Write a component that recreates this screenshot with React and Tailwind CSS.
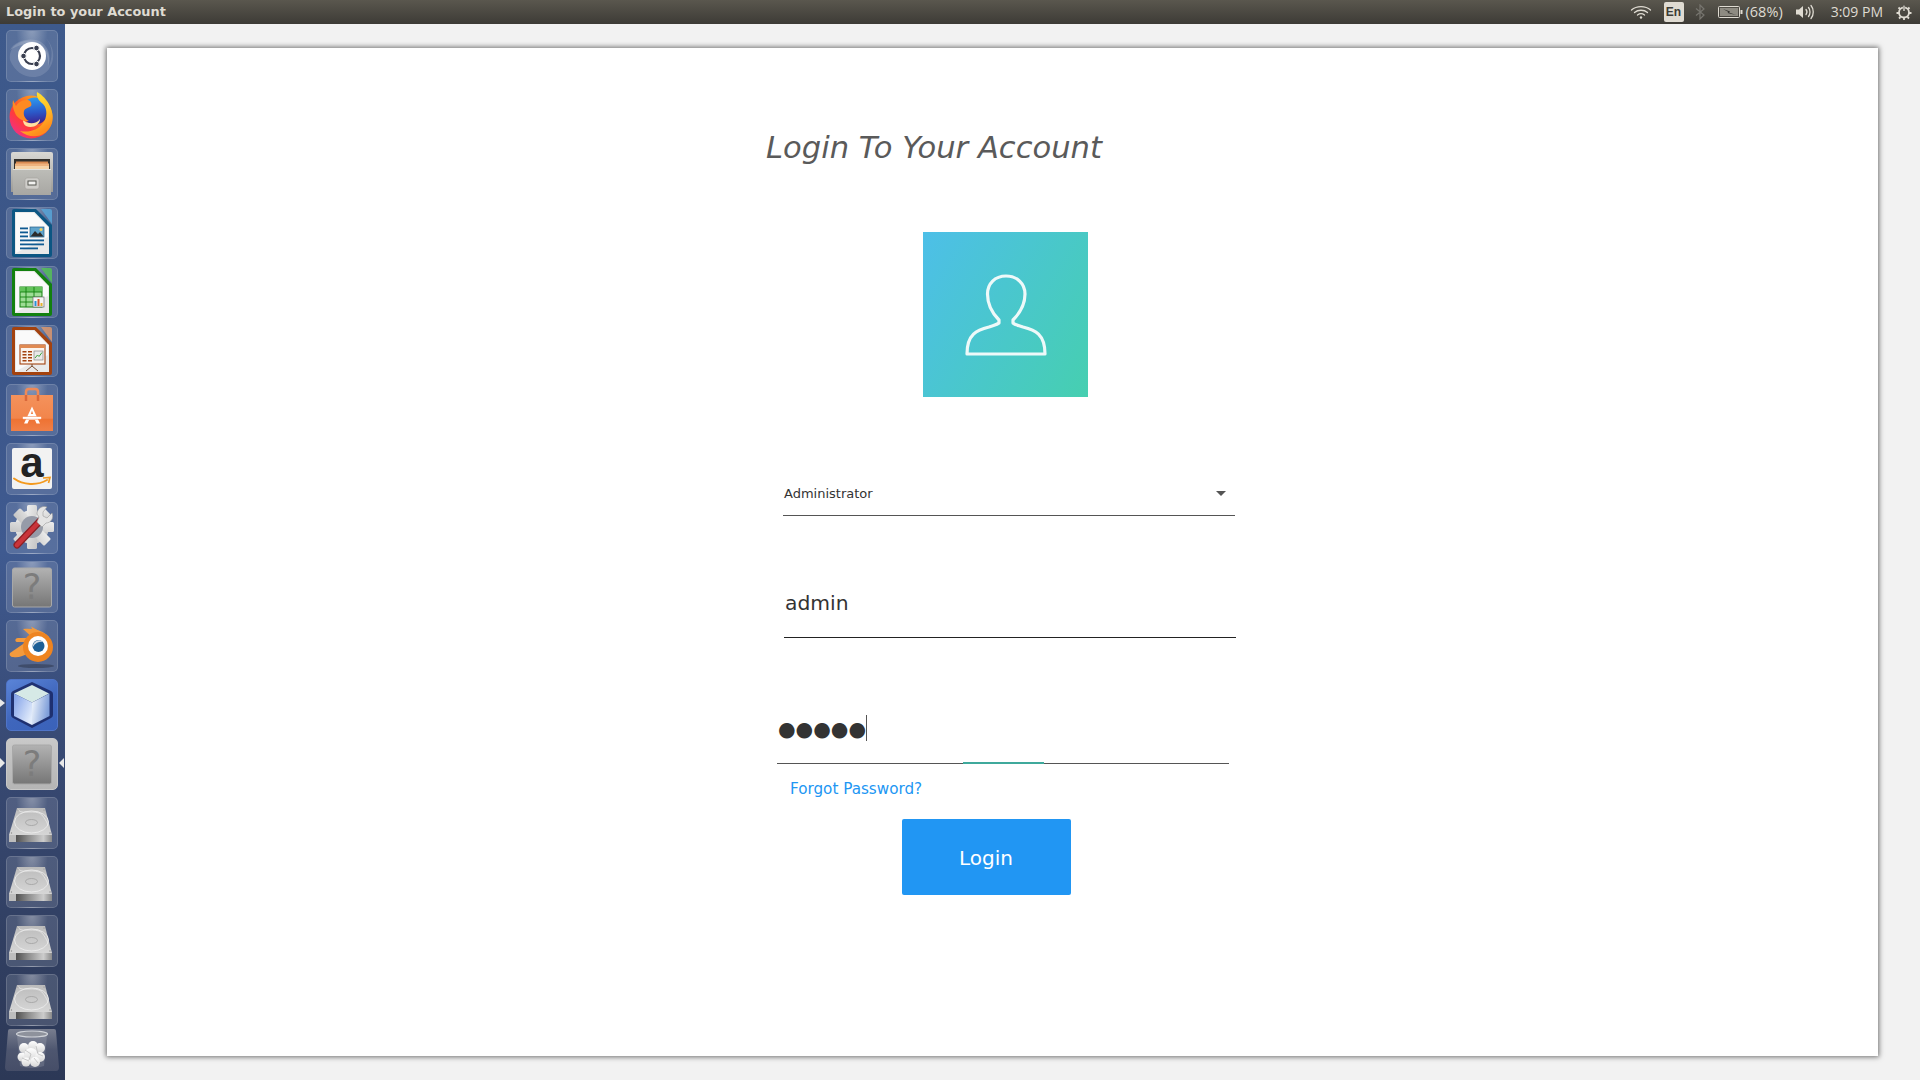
const dv = { fontFamily: '"DejaVu Sans", sans-serif' };

function Tile({ children, active, focus }) {
  const bg = active
    ? 'bg-[linear-gradient(150deg,#5a84d8,#3f66bc_55%,#3a62ba)] border-[#4f74c8]'
    : focus
    ? 'bg-[linear-gradient(180deg,#c9c9c9,#b5b5b5)] border-[#c8c8c8]'
    : 'bg-[radial-gradient(ellipse_at_50%_-5%,rgba(255,255,255,0.42),rgba(255,255,255,0.13)_45%,rgba(255,255,255,0.13))] border-white/15';
  return (
    <div className={`relative h-[52px] w-[52px] shrink-0 rounded-[5px] border ${bg}`}>
      <svg viewBox="0 0 52 52" className="absolute left-[-1px] top-[-1px] h-[52px] w-[52px] overflow-visible">{children}</svg>
    </div>
  );
}

const Ubuntu = () => (
  <>
    <path d="M4 30 C2 14 18 8 30 12 C40 16 45 24 43 36 C48 24 46 12 36 5 C52 16 50 38 36 45 C26 50 10 46 4 30Z" fill="#fff" opacity="0.13" />
    <path d="M4 20 C8 12 20 8 30 10 C42 13 46 26 42 36 C44 20 30 10 18 14 C12 16 7 18 4 20Z" fill="#fff" opacity="0.15" />
    <circle cx="26" cy="26" r="14" fill="#fff" />
    <circle cx="26" cy="26" r="8" fill="none" stroke="#3a3f50" strokeWidth="2.2" />
    <circle cx="17.5" cy="26" r="2.8" fill="#3a3f50" stroke="#fff" strokeWidth="1" />
    <circle cx="30.5" cy="18" r="2.8" fill="#3a3f50" stroke="#fff" strokeWidth="1" />
    <circle cx="30.5" cy="34" r="2.8" fill="#3a3f50" stroke="#fff" strokeWidth="1" />
  </>
);

const Firefox = () => (
  <>
    <defs>
      <linearGradient id="ffa" x1="0.1" y1="0.9" x2="0.8" y2="0.2">
        <stop offset="0" stopColor="#f0308a" />
        <stop offset="0.35" stopColor="#ff3b3b" />
        <stop offset="0.75" stopColor="#ff7a1f" />
        <stop offset="1" stopColor="#ffa51c" />
      </linearGradient>
      <linearGradient id="ffb" x1="0" y1="0" x2="0.4" y2="1">
        <stop offset="0" stopColor="#ffea30" />
        <stop offset="0.6" stopColor="#ffc22a" />
        <stop offset="1" stopColor="#ff8c1c" />
      </linearGradient>
      <linearGradient id="ffc" x1="0.4" y1="0" x2="0.5" y2="1">
        <stop offset="0" stopColor="#2d9cf0" />
        <stop offset="0.55" stopColor="#2b58c8" />
        <stop offset="1" stopColor="#3d1d8c" />
      </linearGradient>
    </defs>
    <circle cx="25" cy="28" r="21.500" fill="url(#ffa)" />
    <circle cx="29" cy="22" r="13.500" fill="url(#ffc)" />
    <path d="M17 31 C21 35 30 36 34 30 C34 36 26 40 20 37 C18 36 17 33 17 31Z" fill="#ffe0a0" />
    <path d="M7 11 L10 17 C13 12 17 11 22 11 C25 12 26 15 25 17 C22 19 19 19 18 22 C17 26 19 30 23 32 C17 33 11 29 9 24 C7 20 6 15 7 11Z" fill="#ff8a22" />
    <path d="M31 3 C30 8 33 12 37 15 C42 20 41 29 37 34 C32 41 23 44 14 42 C26 52 42 47 46 34 C49 23 42 9 31 3Z" fill="url(#ffb)" />
  </>
);

const Files = () => (
  <>
    <defs>
      <linearGradient id="fa" x1="0" y1="0" x2="0" y2="1">
        <stop offset="0" stopColor="#bdbdb8" />
        <stop offset="1" stopColor="#a8a7a3" />
      </linearGradient>
      <linearGradient id="fb" x1="0" y1="0" x2="0" y2="1">
        <stop offset="0" stopColor="#d9d8d4" />
        <stop offset="1" stopColor="#9c9b97" />
      </linearGradient>
    </defs>
    <path d="M5 6 Q5 4 7 4 H45 Q47 4 47 6 V44 H5Z" fill="url(#fb)" />
    <rect x="8" y="11" width="36" height="11" fill="#33302c" />
    <path d="M10 13.500 H42 V21 H10Z" fill="#d98a52" />
    <path d="M9 15.500 H43 V21 H9Z" fill="#eeb27e" />
    <rect x="9" y="18" width="34" height="3.500" fill="#f6d3a8" />
    <rect x="7" y="21" width="38" height="26" fill="url(#fa)" />
    <rect x="7" y="21" width="38" height="1" fill="#e3e2de" />
    <rect x="19" y="30" width="14" height="11" rx="2" fill="#cfceca" stroke="#9c9b97" strokeWidth="0.5" />
    <rect x="22" y="33" width="8" height="4" fill="#f2f2f0" stroke="#55544f" strokeWidth="1" />
  </>
);

const Doc = ({ edge, corner, children }) => (
  <>
    <path d="M35 2 H44 Q46 2 46 4 V17Z" fill={corner} opacity="0.8" />
    <path d="M8 2 H30 L46 18 V48 Q46 50 44 50 H8 Q6 50 6 48 V4 Q6 2 8 2Z" fill={edge} />
    <path d="M9 5 H28.500 L43 20 V47 H9Z" fill="#e9e9e9" />
    <path d="M10 6 H28 L42 20 V30 L10 46Z" fill="#fafafa" />
    {children}
  </>
);

const Writer = () => (
  <Doc edge="#0c5683" corner="#58a9dc">
    <g fill="#0f5a92">
      <rect x="14" y="20.500" width="8" height="1.800" />
      <rect x="14" y="24.500" width="8" height="1.800" />
      <rect x="14" y="28.500" width="8" height="1.800" />
      <rect x="14" y="32.500" width="24" height="1.800" />
      <rect x="14" y="36.500" width="24" height="1.800" />
      <rect x="14" y="40.500" width="18" height="1.800" />
    </g>
    <rect x="24" y="20" width="14" height="10" fill="#5fa4cc" stroke="#245f88" strokeWidth="0.7" />
    <path d="M24.500 29.500 L29 24 L32 27 L34 25 L37.500 29.500Z" fill="#2c2c2c" />
    <circle cx="35" cy="22.500" r="1.500" fill="#f4cf5a" />
  </Doc>
);

const Calc = () => (
  <Doc edge="#12800f" corner="#55c554">
    <rect x="14" y="21" width="22" height="20" fill="#9ddc95" stroke="#12800f" strokeWidth="1" />
    <rect x="14" y="21" width="22" height="5" fill="#63c35b" />
    <g stroke="#12800f" strokeWidth="0.9">
      <path d="M14 26 H36 M14 31 H36 M14 36 H36 M20 21 V41 M28 21 V41" />
    </g>
    <rect x="27" y="31" width="11" height="10" fill="#f4f4f4" stroke="#6f6f6f" strokeWidth="0.7" />
    <rect x="28.500" y="35" width="2" height="5" fill="#2a8fd6" />
    <rect x="31.500" y="33" width="2" height="7" fill="#d9552b" />
    <rect x="34.500" y="37" width="2" height="3" fill="#e6b32e" />
  </Doc>
);

const Impress = () => (
  <Doc edge="#a3420f" corner="#e49a6c">
    <rect x="14" y="20" width="25" height="19" fill="#fbf4ee" stroke="#a3420f" strokeWidth="1.100" />
    <rect x="14" y="20" width="25" height="3" fill="#e08a52" />
    <g fill="#a3420f">
      <rect x="16.500" y="26" width="4" height="1.500" /><rect x="22" y="26" width="4" height="1.500" />
      <rect x="16.500" y="29" width="4" height="1.500" /><rect x="22" y="29" width="4" height="1.500" />
      <rect x="16.500" y="32" width="4" height="1.500" /><rect x="22" y="32" width="4" height="1.500" />
      <rect x="16.500" y="35" width="4" height="1.500" /><rect x="22" y="35" width="4" height="1.500" />
    </g>
    <rect x="28" y="26" width="9" height="9" fill="#e9e9e9" stroke="#777" strokeWidth="0.6" />
    <path d="M29 33 L31.500 30 L33 31.500 L36 27.500" stroke="#3ca33c" strokeWidth="1" fill="none" />
    <path d="M26 39 V41 M26 41 L20 46 M26 41 L32 46" stroke="#7a4a2c" strokeWidth="1" fill="none" />
  </Doc>
);

const Software = () => (
  <>
    <defs>
      <linearGradient id="sa" x1="0" y1="0" x2="0" y2="1">
        <stop offset="0" stopColor="#f4925c" />
        <stop offset="0.65" stopColor="#f2854b" />
        <stop offset="0.66" stopColor="#ee7232" />
        <stop offset="1" stopColor="#f08048" />
      </linearGradient>
    </defs>
    <path d="M20 17 V8 Q20 5 23 5 H29 Q32 5 32 8 V17" fill="none" stroke="#ee8a58" strokeWidth="2.500" />
    <path d="M5 11 H47 V47 H5Z" fill="url(#sa)" />
    <path d="M20 17 V11 M32 17 V11" stroke="#d9683a" strokeWidth="2.500" />
    <path d="M26 22.500 L18 39.500 H21.500 L23 36 H29 L30.500 39.500 H34Z M24.800 30 L26 26.500 L27.200 30Z" fill="#fff" fillRule="evenodd" />
    <rect x="16.500" y="32.500" width="19" height="2.800" rx="1" fill="#fff" stroke="#ee7232" strokeWidth="0.5" />
  </>
);

const Amazon = () => (
  <>
    <rect x="6" y="5" width="40" height="41" rx="2" fill="#f2f2f2" />
    <text x="26" y="34" textAnchor="middle" fontSize="42" fontWeight="bold" fontFamily="Liberation Sans, sans-serif" fill="#222">a</text>
    <path d="M8 35.500 C17 42 31 43 41 37" fill="none" stroke="#f39a1f" strokeWidth="2" strokeLinecap="round" />
    <path d="M37 35 L44 34.500 L42.500 40" fill="none" stroke="#f39a1f" strokeWidth="1.700" />
  </>
);

const Settings = () => (
  <>
    <defs>
      <linearGradient id="wa" x1="0" y1="0" x2="1" y2="1">
        <stop offset="0" stopColor="#eeeeee" />
        <stop offset="1" stopColor="#c4c4c4" />
      </linearGradient>
    </defs>
    <g fill="url(#wa)">
      <circle cx="26" cy="25" r="17" />
      <rect x="21" y="3" width="10" height="44" rx="1.500" />
      <rect x="21" y="3" width="10" height="44" rx="1.500" transform="rotate(45 26 25)" />
      <rect x="21" y="3" width="10" height="44" rx="1.500" transform="rotate(90 26 25)" />
      <rect x="21" y="3" width="10" height="44" rx="1.500" transform="rotate(135 26 25)" />
    </g>
    <circle cx="26" cy="25" r="11" fill="#969ba8" />
    <path d="M11 43 L34 19" stroke="#8c1f24" strokeWidth="7" strokeLinecap="round" />
    <path d="M11 43 L34 19" stroke="#c9343a" strokeWidth="4.600" strokeLinecap="round" />
    <path d="M31 20 L36 25 L40 21 C45 21 48 16 46 11 L41 16 L37 14 L37 10 L41 5 C36 3 31 7 31 12 L33 15Z" fill="#e4e4e4" stroke="#9a9a9a" strokeWidth="0.6" />
  </>
);

const Question = ({ id }) => (
  <>
    <defs>
      <linearGradient id={id} x1="0" y1="0" x2="0" y2="1">
        <stop offset="0" stopColor="#b2b2b2" />
        <stop offset="1" stopColor="#767676" />
      </linearGradient>
    </defs>
    <rect x="6.500" y="7" width="39" height="39" rx="2" fill={`url(#${id})`} stroke="#a8a8a8" strokeWidth="1" />
    <text x="26" y="38" textAnchor="middle" fontSize="35" fontFamily="DejaVu Sans, sans-serif" fill="#7c7c7c">?</text>
  </>
);

const Blender = () => (
  <>
    <path d="M4 33 L20 22 L11 22 C8.500 21.500 9 18 12 18 L27 18 L17 9 C30 8 37 11 43 17 L22 33 C18 36 12 38 7 37 C4.500 37 3 35 4 33Z" fill="#f39a3c" />
    <path d="M25 6.500 L33 11 L28 13Z" fill="#f39a3c" />
    <circle cx="32" cy="27" r="15" fill="#ee8420" />
    <circle cx="32" cy="26" r="10" fill="#fff" />
    <circle cx="32.500" cy="26" r="6" fill="#1d5f96" />
    <path d="M27 27 A6 6 0 0 1 37 22 A9 9 0 0 0 27 27Z" fill="#cfd9e3" />
    <ellipse cx="30" cy="46" rx="18" ry="2" fill="#000" opacity="0.25" />
  </>
);

const Cube = () => (
  <>
    <defs>
      <linearGradient id="ca" x1="0" y1="0" x2="1" y2="0.7">
        <stop offset="0" stopColor="#7f9fe8" />
        <stop offset="1" stopColor="#e2ecfb" />
      </linearGradient>
      <linearGradient id="cb" x1="0" y1="0" x2="1" y2="0.3">
        <stop offset="0" stopColor="#f4f9fd" />
        <stop offset="1" stopColor="#7f9fda" />
      </linearGradient>
    </defs>
    <path d="M26 3 L45 12 Q47 13 47 15 V36 Q47 38 45 39 L26 49 L7 39 Q5 38 5 36 V15 Q5 13 7 12Z" fill="#1b2a68" opacity="0.9" />
    <path d="M26 6 L43 14.500 L26 23.500 L8 14.500Z" fill="#d6e9e6" />
    <path d="M8 14.500 L26 23.500 V46 L8 37Z" fill="url(#ca)" />
    <path d="M26 23.500 L43.500 14.500 V37 L26 46Z" fill="url(#cb)" />
  </>
);

const Disk = () => (
  <>
    <defs>
      <linearGradient id="da" x1="0" y1="0" x2="0" y2="1">
        <stop offset="0" stopColor="#bcbcbc" />
        <stop offset="1" stopColor="#d6d6d6" />
      </linearGradient>
      <linearGradient id="db" x1="0" y1="0" x2="1" y2="0">
        <stop offset="0" stopColor="#2e2e2e" />
        <stop offset="0.45" stopColor="#8d8d8d" />
        <stop offset="0.8" stopColor="#cccccc" />
        <stop offset="1" stopColor="#8a8a8a" />
      </linearGradient>
    </defs>
    <path d="M11 11 H39 L46 38 H3Z" fill="url(#da)" />
    <rect x="3" y="38" width="43" height="7" fill="url(#db)" />
    <rect x="3" y="38" width="7" height="7" fill="#bdbdbd" />
    <ellipse cx="25.500" cy="25" rx="17" ry="11" fill="none" stroke="#ececec" strokeWidth="0.9" />
    <ellipse cx="25.500" cy="25.500" rx="6" ry="3" fill="none" stroke="#a0a0a0" strokeWidth="0.8" />
    <path d="M12 12 C14 18 24 13 33 16 C35 17 38 19 42 28" fill="none" stroke="#e8e8e8" strokeWidth="0.8" />
    <g fill="#8c8c8c">
      <circle cx="5.500" cy="36" r="0.7" /><circle cx="44" cy="36" r="0.7" /><circle cx="12" cy="13" r="0.6" /><circle cx="38" cy="13" r="0.6" />
    </g>
  </>
);

const Trash = () => (
  <div className="ml-[-1px] mt-[-5px] h-[44px] w-[54px] shrink-0">
    <svg viewBox="0 0 54 44" className="h-[44px] w-[54px]">
      <defs>
        <linearGradient id="ta" x1="0" y1="0" x2="0" y2="1">
          <stop offset="0" stopColor="#8a8e9c" />
          <stop offset="0.5" stopColor="#565d75" />
          <stop offset="1" stopColor="#4c536c" />
        </linearGradient>
        <linearGradient id="tb" x1="0" y1="0" x2="0" y2="1">
          <stop offset="0" stopColor="#ffffff" />
          <stop offset="1" stopColor="#d5d5d5" />
        </linearGradient>
      </defs>
      <path d="M5 1 H49 Q51 1 51 3 L54 39 Q54 43 51 43 H3 Q0 43 0 39 L3 3 Q3 1 5 1Z" fill="url(#ta)" opacity="0.8" />
      <path d="M12 7 L15 38 Q27 42 39 38 L42 7Z" fill="#fff" opacity="0.14" />
      <ellipse cx="27" cy="6" rx="15.500" ry="3" fill="#8e929c" stroke="#cfd2d8" strokeWidth="1.200" />
      <g fill="url(#tb)">
        <circle cx="19" cy="20" r="5" /><circle cx="28" cy="18" r="5" /><circle cx="35" cy="20" r="5" />
        <circle cx="17" cy="29" r="4.500" /><circle cx="26" cy="27" r="7" /><circle cx="35" cy="29" r="5" />
        <circle cx="21" cy="34" r="4.500" /><circle cx="30" cy="34" r="5" />
      </g>
      <path d="M20 22 L26 26 L24 32 M31 18 L33 26 L38 28 M17 30 L24 33 M29 30 L33 35" stroke="#bdbdbd" strokeWidth="0.8" fill="none" />
    </svg>
  </div>
);

function Launcher() {
  return (
    <aside className="relative flex w-[65px] shrink-0 flex-col gap-[7px] bg-[linear-gradient(180deg,#3e5a8c_0%,#3b5587_24%,#3f5a90_50%,#384a74_68%,#2c3856_100%)] pl-[6px] pt-[6px]">
      <Tile><Ubuntu /></Tile>
      <Tile><Firefox /></Tile>
      <Tile><Files /></Tile>
      <Tile><Writer /></Tile>
      <Tile><Calc /></Tile>
      <Tile><Impress /></Tile>
      <Tile><Software /></Tile>
      <Tile><Amazon /></Tile>
      <Tile><Settings /></Tile>
      <Tile><Question id="qa" /></Tile>
      <Tile><Blender /></Tile>
      <Tile active><Cube /></Tile>
      <Tile focus><Question id="qb" /></Tile>
      <Tile><Disk /></Tile>
      <Tile><Disk /></Tile>
      <Tile><Disk /></Tile>
      <Tile><Disk /></Tile>
      <Trash />
      <span className="absolute left-0 top-[675px] h-0 w-0 border-y-[4px] border-l-[5px] border-y-transparent border-l-[#e8e8e8]" />
      <span className="absolute left-0 top-[734px] h-0 w-0 border-y-[5px] border-l-[5px] border-y-transparent border-l-[#e8e8e8]" />
      <span className="absolute left-[59px] top-[734px] h-0 w-0 border-y-[5px] border-r-[5px] border-y-transparent border-r-[#e8e8e8]" />
    </aside>
  );
}

function TopBar() {
  return (
    <header className="flex h-[24px] shrink-0 items-center bg-[linear-gradient(180deg,#5a574e,#3d3b36)] pl-[6px] text-[#dfdbd2]">
      <span className="text-[12.900px] font-bold leading-none" style={dv}>Login to your Account</span>
      <div className="ml-auto flex items-center">
        <svg viewBox="0 0 22 16" className="h-[16px] w-[22px]" fill="none" stroke="#dfdbd2" strokeLinecap="round">
          <path d="M1.500 6 C6.500 1.500 15.500 1.500 20.500 6" strokeWidth="1.300" />
          <path d="M4.500 8.500 C8 5.500 14 5.500 17.500 8.500" strokeWidth="1.300" />
          <path d="M7.500 11 C9.500 9.500 12.500 9.500 14.500 11" strokeWidth="1.300" />
          <circle cx="11" cy="13.500" r="1.200" fill="#dfdbd2" stroke="none" />
        </svg>
        <span className="ml-[12px] flex h-[20px] w-[20px] items-center justify-center rounded-[2px] bg-[#dfdbd2] text-[12px] font-bold leading-none text-[#3d3b36]" style={{ fontFamily: '"Liberation Sans", sans-serif' }}>En</span>
        <svg viewBox="0 0 10 16" className="ml-[11px] h-[16px] w-[10px]" fill="none" stroke="#77756f" strokeWidth="1.200">
          <path d="M1 4.500 L9 11 L5 15 V1 L9 5 L1 11.500" />
        </svg>
        <svg viewBox="0 0 25 12" className="ml-[13px] h-[12px] w-[25px]">
          <rect x="0.500" y="0.500" width="21" height="11" rx="1" fill="none" stroke="#dfdbd2" />
          <rect x="2" y="2" width="18" height="8" fill="#8e8b82" />
          <path d="M5 3 L12 5.500 L11 6.500 L18 9 L9.500 7 L10.500 6Z" fill="#2e2d29" />
          <rect x="22.500" y="4" width="2" height="4" fill="#dfdbd2" />
        </svg>
        <span className="ml-[3px] text-[14.500px] leading-none" style={{ fontFamily: '"Open Sans", sans-serif' }}>(68%)</span>
        <svg viewBox="0 0 20 16" className="ml-[12px] h-[16px] w-[20px]" fill="none" stroke="#dfdbd2" strokeWidth="1.300" strokeLinecap="round">
          <path d="M1 5.500 H4 L8 2 V14 L4 10.500 H1Z" fill="#dfdbd2" stroke="none" />
          <path d="M11 5.500 C12.200 7 12.200 9 11 10.500" />
          <path d="M13.500 3.500 C15.500 6 15.500 10 13.500 12.500" />
          <path d="M16 1.500 C19 5 19 11 16 14.500" />
        </svg>
        <span className="ml-[16px] text-[14px] leading-none" style={{ fontFamily: '"Open Sans", sans-serif' }}>3:09 PM</span>
        <svg viewBox="0 0 16 16" className="ml-[13px] mr-[8px] h-[16px] w-[16px]" fill="none" stroke="#dfdbd2">
          <circle cx="8" cy="8.500" r="5" strokeWidth="1.800" />
          <path d="M8 1 V7.500" strokeWidth="2.200" stroke="#3f3d38" />
          <path d="M8 1.500 V7" strokeWidth="1.400" />
          <path d="M2.500 3.500 L4 5 M13.500 3.500 L12 5 M0.500 9 H3 M15.500 9 H13 M3 14.500 L4.500 13 M13 14.500 L11.500 13 M8 16 V14" strokeWidth="1.800" />
        </svg>
      </div>
    </header>
  );
}

function LoginCard() {
  return (
    <section className="flex h-[1008px] flex-col items-start bg-white shadow-[0_0_5px_1px_rgba(0,0,0,0.55)]" style={dv}>
      <h1 className="ml-[659px] mt-[82px] text-[30.600px] font-normal italic leading-[36px] text-[#5a5a5a]">Login To Your Account</h1>
      <div className="ml-[816px] mt-[66px] flex h-[165px] w-[165px] items-center justify-center bg-[linear-gradient(120deg,#4dbfe8,#46cfb0)]">
        <svg viewBox="0 0 165 165" className="h-[165px] w-[165px]" fill="none" stroke="#eef9f9" strokeWidth="3.200" strokeLinejoin="round">
          <path d="M83 44 C72 44 64.500 51.500 64.500 62 C64.500 74 70 82 76 88 L76 91 C74 93 70 93.500 66 95 C54 98 44 102 44 122 L122 122 C122 102 112 98 100 95 C96 93.500 92 93 90 91 L90 88 C96 82 102 74 102 62 C102 51.500 94 44 83 44Z" />
        </svg>
      </div>
      <div className="ml-[676px] mt-[98px] flex h-[21px] w-[452px] items-start justify-between border-b border-[#555] pl-px pr-[9px]">
        <span className="mt-[-9px] text-[13px] leading-[16px] text-[#333]">Administrator</span>
        <span className="mt-[-4px] h-0 w-0 border-x-[5px] border-t-[5px] border-x-transparent border-t-[#555]" />
      </div>
      <div className="ml-[677px] mt-[73px] flex h-[49px] w-[452px] border-b border-[#222] pl-px">
        <span className="text-[20.300px] leading-[29px] text-[#333]">admin</span>
      </div>
      <div className="relative ml-[670px] mt-[67px] flex h-[59px] w-[452px] items-start border-b border-[#555] pl-[1px]">
        <span className="mt-[7px] whitespace-nowrap text-[20.200px] leading-[34px] text-[#333]">●●●●●</span>
        <span className="mt-[10px] h-[26px] w-px bg-[#555]" />
        <span className="absolute bottom-[-1px] left-[186px] h-[2px] w-[81px] bg-[#3fa99c]" />
      </div>
      <a className="ml-[683px] mt-[16px] text-[15.200px] leading-[18px] text-[#2196f3]">Forgot Password?</a>
      <button className="ml-[795px] mt-[21px] h-[76px] w-[169px] rounded-[2px] bg-[#2196f3] pr-px pt-[2px] text-[20px] leading-none text-white">Login</button>
    </section>
  );
}

export default function App() {
  return (
    <div className="flex h-[1080px] w-[1920px] flex-col overflow-hidden bg-[#f2f2f2]">
      <TopBar />
      <div className="flex min-h-0 flex-1">
        <Launcher />
        <main className="min-w-0 flex-1 px-[42px] py-[24px]">
          <LoginCard />
        </main>
      </div>
    </div>
  );
}
